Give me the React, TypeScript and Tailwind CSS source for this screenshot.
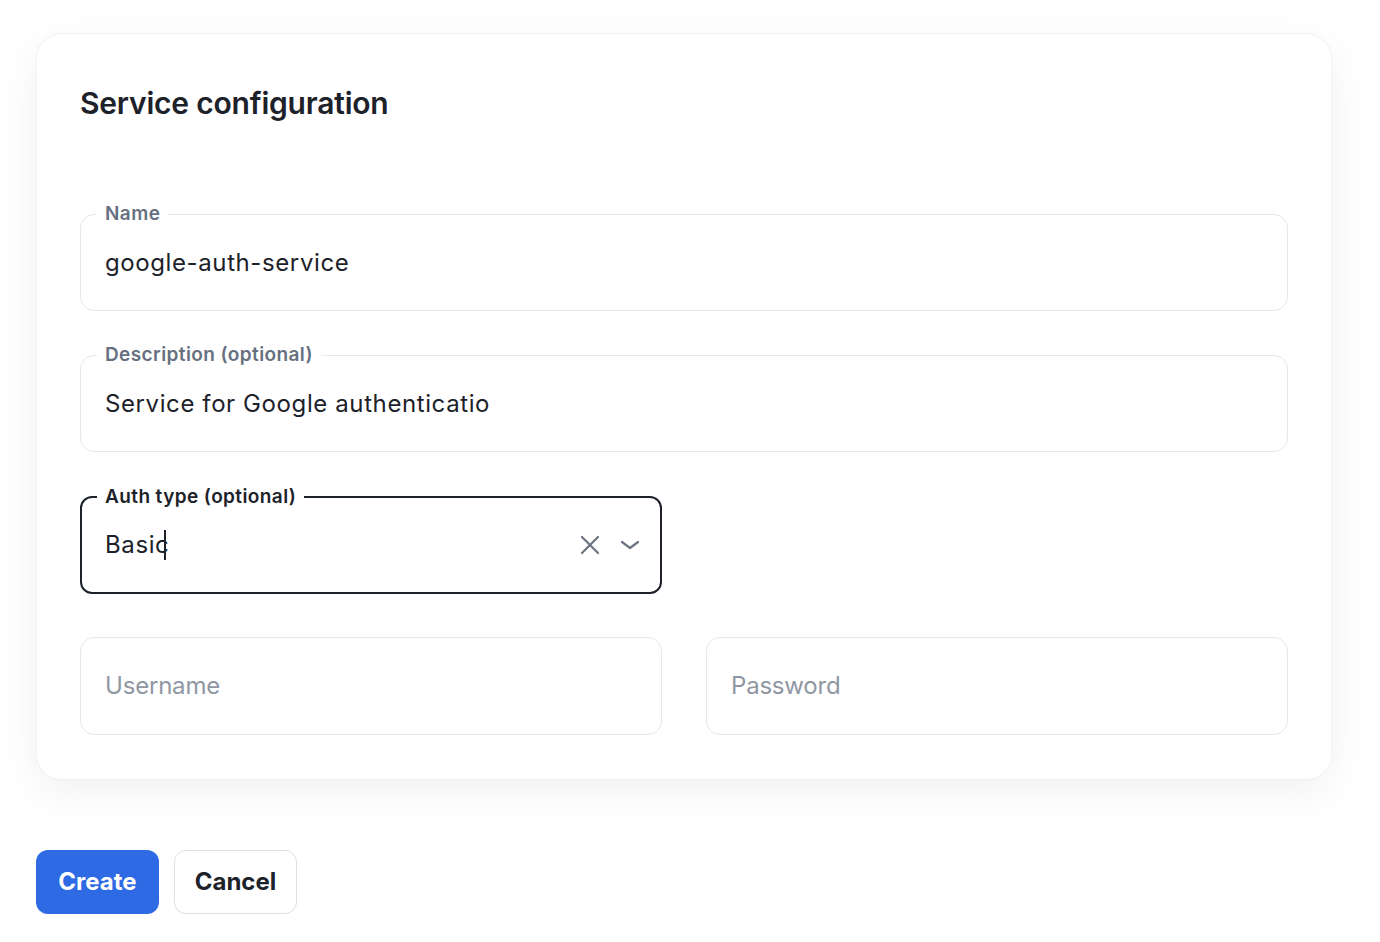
import React from 'react';

const font = { fontFamily: 'Inter, "Noto Sans", sans-serif' };

const TextField = ({ label, value }: { label: string; value: string }) => {
  return (
    <fieldset className="border border-[#e7e8ea] rounded-[14px] pl-[16px] pr-6 pb-[31px] min-w-0">
      <legend className="px-2 text-[19px] leading-[24px] font-semibold text-[#667080] tracking-[0.4px]">{label}</legend>
      <div className="pl-2 pt-[21px] text-[24px] leading-[32px] text-[#1d222a] whitespace-nowrap overflow-hidden tracking-[0.6px]">
        {value}
      </div>
    </fieldset>
  );
};

const PlainField = ({ placeholder }: { placeholder: string }) => {
  return (
    <div className="border border-[#e7e8ea] rounded-[14px] h-[98px] flex items-center px-6">
      <span className="text-[24px] leading-[32px] text-[#8f97a3] tracking-[-0.2px]">{placeholder}</span>
    </div>
  );
};

const App = () => {
  return (
    <div className="min-h-screen bg-white pt-[33px] pl-[36px]" style={font}>
      <div className="w-[1296px] bg-white border border-[#f1f2f3] rounded-[26px] shadow-[0_12px_40px_rgba(15,23,42,0.06)] pt-[51px] px-[43px] pb-[44px]">
        <h2 className="text-[30px] leading-[36px] font-semibold text-[#1d222a] tracking-[-0.2px]">
          Service configuration
        </h2>

        <div className="mt-[81px] flex flex-col gap-[32px]">
          <TextField label="Name" value="google-auth-service" />
          <TextField label="Description (optional)" value="Service for Google authenticatio" />

          <div className="grid grid-cols-2 gap-x-[44px] gap-y-[43px] pt-px">
            {/* Auth type select, focused */}
            <fieldset className="border-2 border-[#1d222a] rounded-[12px] pl-[15px] pr-5 pb-[31px] min-w-0">
              <legend className="px-2 text-[19px] leading-[24px] font-semibold text-[#1d222a] tracking-[0.4px]">Auth type (optional)</legend>
              <div className="pl-2 pt-[20px] flex items-center">
                <span className="text-[24px] leading-[32px] text-[#1d222a] tracking-[0.6px]">Basic</span>
                <span className="w-[2px] h-[30px] bg-[#1d222a] -ml-[5px]" />
                <div className="ml-auto flex items-center gap-[20px] text-[#6b7480]">
                  <svg width="20" height="20" viewBox="0 0 20 20" fill="none" stroke="currentColor" strokeWidth="2.2" strokeLinecap="round">
                    <path d="M2 2 L18 18 M18 2 L2 18" />
                  </svg>
                  <svg width="20" height="12" viewBox="0 0 20 12" fill="none" stroke="currentColor" strokeWidth="2.2" strokeLinecap="round" strokeLinejoin="round">
                    <path d="M2 3 L10 9 L18 3" />
                  </svg>
                </div>
              </div>
            </fieldset>
            <div />

            <PlainField placeholder="Username" />
            <PlainField placeholder="Password" />
          </div>
        </div>
      </div>

      <div className="mt-[70px] flex gap-[15px]">
        <button className="w-[123px] h-[64px] rounded-[12px] bg-[#2d6ae3] text-white text-[24px] font-bold">
          Create
        </button>
        <button className="w-[123px] h-[64px] rounded-[12px] border border-[#dcdee1] bg-white text-[#1d222a] text-[24px] font-bold">
          Cancel
        </button>
      </div>
    </div>
  );
};

export default App;
